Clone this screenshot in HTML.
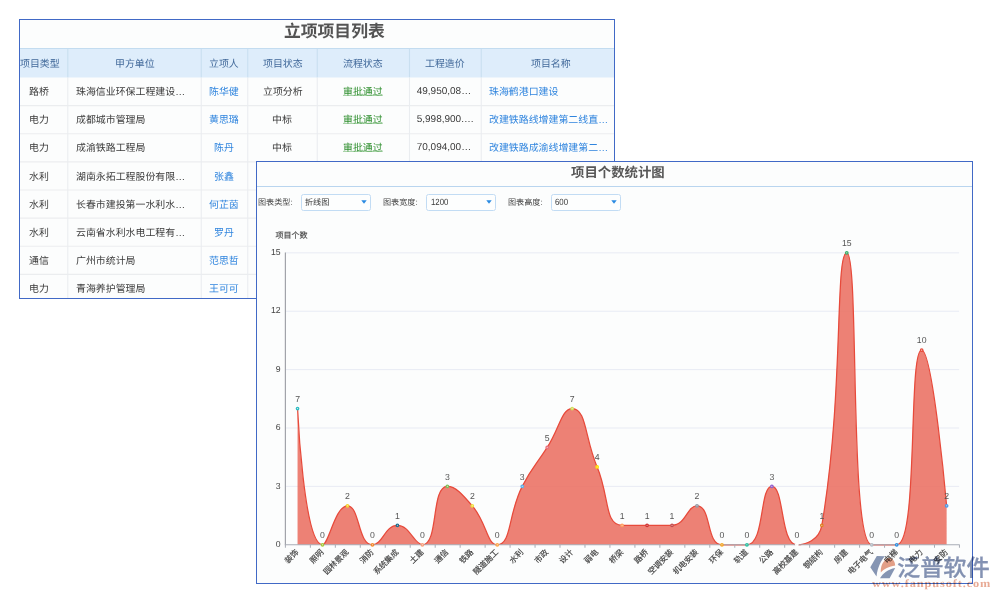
<!DOCTYPE html>
<html lang="zh-CN">
<head>
<meta charset="utf-8">
<title>立项项目列表 - 项目个数统计图</title>
<style>
html,body{margin:0;padding:0;background:#fff}
body{width:1000px;height:600px;position:relative;overflow:hidden;font-family:"Liberation Sans","Noto Sans CJK SC",sans-serif;text-rendering:geometricPrecision;-webkit-font-smoothing:antialiased}
#list,#chart{position:absolute;border:1px solid #4169c6;background:#fcfdfd;overflow:hidden}
#list *,#chart>*,#logo>*{position:absolute}
svg.t{display:block;overflow:visible;font-family:"Liberation Sans","Noto Sans CJK SC",sans-serif}
svg.bg{left:0;top:0}
.n{white-space:nowrap;letter-spacing:0}
.tl{left:0;right:0;height:1px;background:#b9d5ef}
.sel{border:1px solid #c2dcf4;border-radius:2.5px;background:#fdfefe}
#plot{left:0;top:0;font-family:"Liberation Sans","Noto Sans CJK SC",sans-serif;text-rendering:geometricPrecision}
.yl{font-size:8.7px;fill:#444}
.vl{font-size:8.7px;fill:#555}
#logo{position:absolute;left:0;top:0;width:1000px;height:600px;pointer-events:none;mix-blend-mode:multiply}
.url{font-family:"Liberation Serif",serif;font-weight:bold;font-size:11px;line-height:18px;letter-spacing:.8px;color:#e8aa95;white-space:nowrap;transform:scaleX(1.12);transform-origin:0 50%}
</style>
</head>
<body>
<div id="list" style="left:19px;top:19px;width:594px;height:278px">
<svg class="bg" width="594" height="278" viewBox="20 20 594 278" aria-hidden="true"><rect x="20" y="48.2" width="594" height="29.3" fill="#deedfb"/><path d="M20 48.5h594" stroke="#c3dcf0" stroke-width="1.2"/><path d="M20 105.63h594M20 133.76h594M20 161.89h594M20 190.02h594M20 218.15h594M20 246.28h594M20 274.41h594M20 302.54h594" stroke="#ebedef" stroke-width="1.1"/><path d="M67.8 49V77.5M201.25 49V77.5M247.75 49V77.5M317.25 49V77.5M409.5 49V77.5M481.25 49V77.5" stroke="#c9dff0" stroke-width="1.1"/><path d="M67.8 77.5V299M201.25 77.5V299M247.75 77.5V299M317.25 77.5V299M409.5 77.5V299M481.25 77.5V299" stroke="#eaedf0" stroke-width="1.1"/></svg>
<svg class="t" role="img" aria-label="立项项目列表" width="100.8" height="16.8" fill="#545454" style="left:263.7px;top:1.9px;"><title>立项项目列表</title><text x="0" y="14.8" font-size="16.8" font-weight="bold">立项项目列表</text></svg>
<svg class="t" role="img" aria-label="项目类型" width="39.72" height="9.93" fill="#41699a" style="left:0.04px;top:38.03px;"><title>项目类型</title><text x="0" y="8.74" font-size="9.93">项目类型</text></svg>
<svg class="t" role="img" aria-label="甲方单位" width="39.72" height="9.93" fill="#41699a" style="left:94.89px;top:38.03px;"><title>甲方单位</title><text x="0" y="8.74" font-size="9.93">甲方单位</text></svg>
<svg class="t" role="img" aria-label="立项人" width="29.79" height="9.93" fill="#41699a" style="left:189.41px;top:38.03px;"><title>立项人</title><text x="0" y="8.74" font-size="9.93">立项人</text></svg>
<svg class="t" role="img" aria-label="项目状态" width="39.72" height="9.93" fill="#41699a" style="left:242.54px;top:38.03px;"><title>项目状态</title><text x="0" y="8.74" font-size="9.93">项目状态</text></svg>
<svg class="t" role="img" aria-label="流程状态" width="39.72" height="9.93" fill="#41699a" style="left:323.24px;top:38.03px;"><title>流程状态</title><text x="0" y="8.74" font-size="9.93">流程状态</text></svg>
<svg class="t" role="img" aria-label="工程造价" width="39.72" height="9.93" fill="#41699a" style="left:405.24px;top:38.03px;"><title>工程造价</title><text x="0" y="8.74" font-size="9.93">工程造价</text></svg>
<svg class="t" role="img" aria-label="项目名称" width="39.72" height="9.93" fill="#41699a" style="left:510.89px;top:38.03px;"><title>项目名称</title><text x="0" y="8.74" font-size="9.93">项目名称</text></svg>
<svg class="t" role="img" aria-label="路桥" width="19.86" height="9.93" fill="#3a3a3a" style="left:9.27px;top:66.2px;"><title>路桥</title><text x="0" y="8.74" font-size="9.93">路桥</text></svg>
<svg class="t" role="img" aria-label="珠海信业环保工程建设…" width="109.23" height="9.93" fill="#3a3a3a" style="left:55.6px;top:66.2px;"><title>珠海信业环保工程建设…</title><text x="0" y="8.74" font-size="9.93">珠海信业环保工程建设…</text></svg>
<svg class="t" role="img" aria-label="陈华健" width="29.79" height="9.93" fill="#3085de" style="left:189.41px;top:66.2px;"><title>陈华健</title><text x="0" y="8.74" font-size="9.93">陈华健</text></svg>
<svg class="t" role="img" aria-label="立项分析" width="39.72" height="9.93" fill="#3a3a3a" style="left:242.54px;top:66.2px;"><title>立项分析</title><text x="0" y="8.74" font-size="9.93">立项分析</text></svg>
<svg class="t" role="img" aria-label="审批通过" width="39.72" height="9.93" fill="#2f8f2f" style="left:323.24px;top:66.2px;"><title>审批通过</title><text x="0" y="8.74" font-size="9.93">审批通过</text><path d="M0 9.38H39.72" stroke="#6bb56b" stroke-width=".65" fill="none"/></svg>
<span class="n" style="left:396.7px;top:66.06px;font-size:10px;line-height:12px;color:#3a3a3a;">49,950,08…</span>
<svg class="t" role="img" aria-label="珠海鹤港口建设" width="69.51" height="9.93" fill="#3085de" style="left:469.3px;top:66.2px;"><title>珠海鹤港口建设</title><text x="0" y="8.74" font-size="9.93">珠海鹤港口建设</text></svg>
<svg class="t" role="img" aria-label="电力" width="19.86" height="9.93" fill="#3a3a3a" style="left:9.27px;top:94.33px;"><title>电力</title><text x="0" y="8.74" font-size="9.93">电力</text></svg>
<svg class="t" role="img" aria-label="成都城市管理局" width="69.51" height="9.93" fill="#3a3a3a" style="left:55.6px;top:94.33px;"><title>成都城市管理局</title><text x="0" y="8.74" font-size="9.93">成都城市管理局</text></svg>
<svg class="t" role="img" aria-label="黄思璐" width="29.79" height="9.93" fill="#3085de" style="left:189.41px;top:94.33px;"><title>黄思璐</title><text x="0" y="8.74" font-size="9.93">黄思璐</text></svg>
<svg class="t" role="img" aria-label="中标" width="19.86" height="9.93" fill="#3a3a3a" style="left:252.47px;top:94.33px;"><title>中标</title><text x="0" y="8.74" font-size="9.93">中标</text></svg>
<svg class="t" role="img" aria-label="审批通过" width="39.72" height="9.93" fill="#2f8f2f" style="left:323.24px;top:94.33px;"><title>审批通过</title><text x="0" y="8.74" font-size="9.93">审批通过</text><path d="M0 9.38H39.72" stroke="#6bb56b" stroke-width=".65" fill="none"/></svg>
<span class="n" style="left:396.7px;top:94.19px;font-size:10px;line-height:12px;color:#3a3a3a;">5,998,900.…</span>
<svg class="t" role="img" aria-label="改建铁路线增建第二线直…" width="119.16" height="9.93" fill="#3085de" style="left:469.3px;top:94.33px;"><title>改建铁路线增建第二线直…</title><text x="0" y="8.74" font-size="9.93">改建铁路线增建第二线直…</text></svg>
<svg class="t" role="img" aria-label="电力" width="19.86" height="9.93" fill="#3a3a3a" style="left:9.27px;top:122.46px;"><title>电力</title><text x="0" y="8.74" font-size="9.93">电力</text></svg>
<svg class="t" role="img" aria-label="成渝铁路工程局" width="69.51" height="9.93" fill="#3a3a3a" style="left:55.6px;top:122.46px;"><title>成渝铁路工程局</title><text x="0" y="8.74" font-size="9.93">成渝铁路工程局</text></svg>
<svg class="t" role="img" aria-label="陈丹" width="19.86" height="9.93" fill="#3085de" style="left:194.37px;top:122.46px;"><title>陈丹</title><text x="0" y="8.74" font-size="9.93">陈丹</text></svg>
<svg class="t" role="img" aria-label="中标" width="19.86" height="9.93" fill="#3a3a3a" style="left:252.47px;top:122.46px;"><title>中标</title><text x="0" y="8.74" font-size="9.93">中标</text></svg>
<svg class="t" role="img" aria-label="审批通过" width="39.72" height="9.93" fill="#2f8f2f" style="left:323.24px;top:122.46px;"><title>审批通过</title><text x="0" y="8.74" font-size="9.93">审批通过</text><path d="M0 9.38H39.72" stroke="#6bb56b" stroke-width=".65" fill="none"/></svg>
<span class="n" style="left:396.7px;top:122.32px;font-size:10px;line-height:12px;color:#3a3a3a;">70,094,00…</span>
<svg class="t" role="img" aria-label="改建铁路成渝线增建第二…" width="119.16" height="9.93" fill="#3085de" style="left:469.3px;top:122.46px;"><title>改建铁路成渝线增建第二…</title><text x="0" y="8.74" font-size="9.93">改建铁路成渝线增建第二…</text></svg>
<svg class="t" role="img" aria-label="水利" width="19.86" height="9.93" fill="#3a3a3a" style="left:9.27px;top:150.59px;"><title>水利</title><text x="0" y="8.74" font-size="9.93">水利</text></svg>
<svg class="t" role="img" aria-label="湖南永拓工程股份有限…" width="109.23" height="9.93" fill="#3a3a3a" style="left:55.6px;top:150.59px;"><title>湖南永拓工程股份有限…</title><text x="0" y="8.74" font-size="9.93">湖南永拓工程股份有限…</text></svg>
<svg class="t" role="img" aria-label="张鑫" width="19.86" height="9.93" fill="#3085de" style="left:194.37px;top:150.59px;"><title>张鑫</title><text x="0" y="8.74" font-size="9.93">张鑫</text></svg>
<svg class="t" role="img" aria-label="水利" width="19.86" height="9.93" fill="#3a3a3a" style="left:9.27px;top:178.72px;"><title>水利</title><text x="0" y="8.74" font-size="9.93">水利</text></svg>
<svg class="t" role="img" aria-label="长春市建投第一水利水…" width="109.23" height="9.93" fill="#3a3a3a" style="left:55.6px;top:178.72px;"><title>长春市建投第一水利水…</title><text x="0" y="8.74" font-size="9.93">长春市建投第一水利水…</text></svg>
<svg class="t" role="img" aria-label="何芷茵" width="29.79" height="9.93" fill="#3085de" style="left:189.41px;top:178.72px;"><title>何芷茵</title><text x="0" y="8.74" font-size="9.93">何芷茵</text></svg>
<svg class="t" role="img" aria-label="水利" width="19.86" height="9.93" fill="#3a3a3a" style="left:9.27px;top:206.85px;"><title>水利</title><text x="0" y="8.74" font-size="9.93">水利</text></svg>
<svg class="t" role="img" aria-label="云南省水利水电工程有…" width="109.23" height="9.93" fill="#3a3a3a" style="left:55.6px;top:206.85px;"><title>云南省水利水电工程有…</title><text x="0" y="8.74" font-size="9.93">云南省水利水电工程有…</text></svg>
<svg class="t" role="img" aria-label="罗丹" width="19.86" height="9.93" fill="#3085de" style="left:194.37px;top:206.85px;"><title>罗丹</title><text x="0" y="8.74" font-size="9.93">罗丹</text></svg>
<svg class="t" role="img" aria-label="通信" width="19.86" height="9.93" fill="#3a3a3a" style="left:9.27px;top:234.98px;"><title>通信</title><text x="0" y="8.74" font-size="9.93">通信</text></svg>
<svg class="t" role="img" aria-label="广州市统计局" width="59.58" height="9.93" fill="#3a3a3a" style="left:55.6px;top:234.98px;"><title>广州市统计局</title><text x="0" y="8.74" font-size="9.93">广州市统计局</text></svg>
<svg class="t" role="img" aria-label="范思哲" width="29.79" height="9.93" fill="#3085de" style="left:189.41px;top:234.98px;"><title>范思哲</title><text x="0" y="8.74" font-size="9.93">范思哲</text></svg>
<svg class="t" role="img" aria-label="电力" width="19.86" height="9.93" fill="#3a3a3a" style="left:9.27px;top:263.11px;"><title>电力</title><text x="0" y="8.74" font-size="9.93">电力</text></svg>
<svg class="t" role="img" aria-label="青海养护管理局" width="69.51" height="9.93" fill="#3a3a3a" style="left:55.6px;top:263.11px;"><title>青海养护管理局</title><text x="0" y="8.74" font-size="9.93">青海养护管理局</text></svg>
<svg class="t" role="img" aria-label="王可可" width="29.79" height="9.93" fill="#3085de" style="left:189.41px;top:263.11px;"><title>王可可</title><text x="0" y="8.74" font-size="9.93">王可可</text></svg>
</div>
<div id="chart" style="left:256px;top:161px;width:715px;height:421px">
<svg class="t" role="img" aria-label="项目个数统计图" width="93.8" height="13.4" fill="#575757" style="left:314.1px;top:3.1px;"><title>项目个数统计图</title><text x="0" y="11.8" font-size="13.4" font-weight="bold">项目个数统计图</text></svg>
<div class="tl" style="top:24px"></div>
<svg class="t" role="img" aria-label="图表类型:" width="34.65" height="8.1" fill="#444" style="left:1.4px;top:36.35px;"><title>图表类型:</title><text x="0" y="7.13" font-size="8.1">图表类型:</text></svg>
<div class="sel" style="left:44px;top:32.4px;width:68px;height:14.2px"></div>
<svg class="t" role="img" aria-label="折线图" width="24.3" height="8.1" fill="#333" style="left:48.2px;top:36.35px;"><title>折线图</title><text x="0" y="7.13" font-size="8.1">折线图</text></svg>
<svg class="t" style="left:103.6px;top:38.2px" width="6" height="4" viewBox="0 0 6 4" aria-hidden="true"><path d="M.3 .2H5.7L3 3.8Z" fill="#2a8ae2"/></svg>
<svg class="t" role="img" aria-label="图表宽度:" width="34.65" height="8.1" fill="#444" style="left:126.2px;top:36.35px;"><title>图表宽度:</title><text x="0" y="7.13" font-size="8.1">图表宽度:</text></svg>
<div class="sel" style="left:169.4px;top:32.4px;width:67.8px;height:14.2px"></div>
<span class="n" style="left:174px;top:35.1px;font-size:9px;line-height:10.8px;color:#3a3a3a;transform:scaleX(.87);transform-origin:0 50%;">1200</span>
<svg class="t" style="left:228.8px;top:38.2px" width="6" height="4" viewBox="0 0 6 4" aria-hidden="true"><path d="M.3 .2H5.7L3 3.8Z" fill="#2a8ae2"/></svg>
<svg class="t" role="img" aria-label="图表高度:" width="34.65" height="8.1" fill="#444" style="left:251px;top:36.35px;"><title>图表高度:</title><text x="0" y="7.13" font-size="8.1">图表高度:</text></svg>
<div class="sel" style="left:293.8px;top:32.4px;width:68px;height:14.2px"></div>
<span class="n" style="left:298.4px;top:35.1px;font-size:9px;line-height:10.8px;color:#3a3a3a;transform:scaleX(.87);transform-origin:0 50%;">600</span>
<svg class="t" style="left:353.6px;top:38.2px" width="6" height="4" viewBox="0 0 6 4" aria-hidden="true"><path d="M.3 .2H5.7L3 3.8Z" fill="#2a8ae2"/></svg>
<svg id="plot" width="715" height="421" viewBox="257 162 715 421" aria-label="项目个数统计图 折线图"><path d="M285.4 486.37H959.12" stroke="#e8ebf4" stroke-width="1"/><path d="M285.4 427.99H959.12" stroke="#e8ebf4" stroke-width="1"/><path d="M285.4 369.61H959.12" stroke="#e8ebf4" stroke-width="1"/><path d="M285.4 311.23H959.12" stroke="#e8ebf4" stroke-width="1"/><path d="M285.4 252.85H959.12" stroke="#e8ebf4" stroke-width="1"/><text class="yl" x="280.6" y="546.95" text-anchor="end">0</text><text class="yl" x="280.6" y="488.57" text-anchor="end">3</text><text class="yl" x="280.6" y="430.19" text-anchor="end">6</text><text class="yl" x="280.6" y="371.81" text-anchor="end">9</text><text class="yl" x="280.6" y="313.43" text-anchor="end">12</text><text class="yl" x="280.6" y="255.05" text-anchor="end">15</text><g fill="#444" stroke="#444" stroke-width=".16"><text x="275.6" y="238.24" font-size="8">项目个数</text></g><path d="M297.55 408.53C297.55 408.53 303.8 544.75 322.51 544.75C328.76 544.75 335 505.83 347.48 505.83C359.96 505.83 357.63 544.75 372.44 544.75C382.59 544.75 384.93 525.29 397.41 525.29C409.89 525.29 414.07 544.75 422.38 544.75C439.03 544.75 430.68 486.37 447.34 486.37C455.65 486.37 462.16 493.97 472.31 505.83C487.12 523.16 486.75 544.75 497.27 544.75C511.72 544.75 507.79 514.52 522.24 486.37C532.75 465.87 534.72 466.91 547.2 447.45C559.68 427.99 561.65 408.53 572.16 408.53C586.61 408.53 584.65 437.72 597.13 466.91C609.61 496.1 604.18 525.29 622.1 525.29C629.14 525.29 634.58 525.29 647.06 525.29C659.54 525.29 661.02 525.29 672.03 525.29C685.98 525.29 686.84 505.83 696.99 505.83C711.81 505.83 705.74 544.75 721.95 544.75C730.71 544.75 739.87 544.75 746.92 544.75C764.84 544.75 759.4 486.37 771.88 486.37C784.37 486.37 780.19 544.75 796.85 544.75C805.16 544.75 819.23 540.43 821.82 525.29C844.19 394.48 834.72 252.85 846.78 252.85C859.69 252.85 848.74 544.75 871.75 544.75C873.71 544.75 893.89 544.75 896.71 544.75C918.86 544.75 907.83 350.15 921.67 350.15C932.8 350.15 946.64 505.83 946.64 505.83L946.64 544.75L297.55 544.75Z" fill="#ea6f62" fill-opacity="0.88"/><path d="M297.55 408.53C297.55 408.53 303.8 544.75 322.51 544.75C328.76 544.75 335 505.83 347.48 505.83C359.96 505.83 357.63 544.75 372.44 544.75C382.59 544.75 384.93 525.29 397.41 525.29C409.89 525.29 414.07 544.75 422.38 544.75C439.03 544.75 430.68 486.37 447.34 486.37C455.65 486.37 462.16 493.97 472.31 505.83C487.12 523.16 486.75 544.75 497.27 544.75C511.72 544.75 507.79 514.52 522.24 486.37C532.75 465.87 534.72 466.91 547.2 447.45C559.68 427.99 561.65 408.53 572.16 408.53C586.61 408.53 584.65 437.72 597.13 466.91C609.61 496.1 604.18 525.29 622.1 525.29C629.14 525.29 634.58 525.29 647.06 525.29C659.54 525.29 661.02 525.29 672.03 525.29C685.98 525.29 686.84 505.83 696.99 505.83C711.81 505.83 705.74 544.75 721.95 544.75C730.71 544.75 739.87 544.75 746.92 544.75C764.84 544.75 759.4 486.37 771.88 486.37C784.37 486.37 780.19 544.75 796.85 544.75C805.16 544.75 819.23 540.43 821.82 525.29C844.19 394.48 834.72 252.85 846.78 252.85C859.69 252.85 848.74 544.75 871.75 544.75C873.71 544.75 893.89 544.75 896.71 544.75C918.86 544.75 907.83 350.15 921.67 350.15C932.8 350.15 946.64 505.83 946.64 505.83" fill="none" stroke="#e74a3b" stroke-width="1.25" stroke-linejoin="round"/><path d="M285.4 252.55V545.25" stroke="#a2a4aa" stroke-width="1.2"/><path d="M284.9 544.75H959.62" stroke="#a9adb6" stroke-width="1.1"/><path d="M285.4 544.75v3M310.36 544.75v3M335.33 544.75v3M360.29 544.75v3M385.26 544.75v3M410.22 544.75v3M435.19 544.75v3M460.15 544.75v3M485.12 544.75v3M510.08 544.75v3M535.05 544.75v3M560.01 544.75v3M584.98 544.75v3M609.94 544.75v3M634.91 544.75v3M659.88 544.75v3M684.84 544.75v3M709.8 544.75v3M734.77 544.75v3M759.73 544.75v3M784.7 544.75v3M809.66 544.75v3M834.63 544.75v3M859.6 544.75v3M884.56 544.75v3M909.52 544.75v3M934.49 544.75v3M959.45 544.75v3" stroke="#a9adb6" stroke-width="1"/><circle cx="297.55" cy="408.53" r="1.2" fill="#fff" fill-opacity=".8" stroke="#2fbfc4" stroke-width="1.35"/><text class="vl" x="297.55" y="401.83" text-anchor="middle">7</text><circle cx="322.51" cy="544.75" r="1.2" fill="#fff" fill-opacity=".8" stroke="#a5cc3a" stroke-width="1.35"/><text class="vl" x="322.51" y="538.05" text-anchor="middle">0</text><circle cx="347.48" cy="505.83" r="1.2" fill="#fff" fill-opacity=".8" stroke="#f3d32c" stroke-width="1.35"/><text class="vl" x="347.48" y="499.13" text-anchor="middle">2</text><circle cx="372.44" cy="544.75" r="1.2" fill="#fff" fill-opacity=".8" stroke="#f58a2c" stroke-width="1.35"/><text class="vl" x="372.44" y="538.05" text-anchor="middle">0</text><circle cx="397.41" cy="525.29" r="1.2" fill="#fff" fill-opacity=".8" stroke="#1f6f8f" stroke-width="1.35"/><text class="vl" x="397.41" y="518.59" text-anchor="middle">1</text><circle cx="422.38" cy="544.75" r="1.2" fill="#fff" fill-opacity=".8" stroke="#f9a07c" stroke-width="1.35"/><text class="vl" x="422.38" y="538.05" text-anchor="middle">0</text><circle cx="447.34" cy="486.37" r="1.2" fill="#fff" fill-opacity=".8" stroke="#7cc35a" stroke-width="1.35"/><text class="vl" x="447.34" y="479.67" text-anchor="middle">3</text><circle cx="472.31" cy="505.83" r="1.2" fill="#fff" fill-opacity=".8" stroke="#efe23c" stroke-width="1.35"/><text class="vl" x="472.31" y="499.13" text-anchor="middle">2</text><circle cx="497.27" cy="544.75" r="1.2" fill="#fff" fill-opacity=".8" stroke="#ffa648" stroke-width="1.35"/><text class="vl" x="497.27" y="538.05" text-anchor="middle">0</text><circle cx="522.24" cy="486.37" r="1.2" fill="#fff" fill-opacity=".8" stroke="#58b4ee" stroke-width="1.35"/><text class="vl" x="522.24" y="479.67" text-anchor="middle">3</text><circle cx="547.2" cy="447.45" r="1.2" fill="#fff" fill-opacity=".8" stroke="#e9707c" stroke-width="1.35"/><text class="vl" x="547.2" y="440.75" text-anchor="middle">5</text><circle cx="572.16" cy="408.53" r="1.2" fill="#fff" fill-opacity=".8" stroke="#cfe05c" stroke-width="1.35"/><text class="vl" x="572.16" y="401.83" text-anchor="middle">7</text><circle cx="597.13" cy="466.91" r="1.2" fill="#fff" fill-opacity=".8" stroke="#ffe100" stroke-width="1.35"/><text class="vl" x="597.13" y="460.21" text-anchor="middle">4</text><circle cx="622.1" cy="525.29" r="1.2" fill="#fff" fill-opacity=".8" stroke="#ffa060" stroke-width="1.35"/><text class="vl" x="622.1" y="518.59" text-anchor="middle">1</text><circle cx="647.06" cy="525.29" r="1.2" fill="#fff" fill-opacity=".8" stroke="#cf3030" stroke-width="1.35"/><text class="vl" x="647.06" y="518.59" text-anchor="middle">1</text><circle cx="672.03" cy="525.29" r="1.2" fill="#fff" fill-opacity=".8" stroke="#c24c4c" stroke-width="1.35"/><text class="vl" x="672.03" y="518.59" text-anchor="middle">1</text><circle cx="696.99" cy="505.83" r="1.2" fill="#fff" fill-opacity=".8" stroke="#8f9aa6" stroke-width="1.35"/><text class="vl" x="696.99" y="499.13" text-anchor="middle">2</text><circle cx="721.95" cy="544.75" r="1.2" fill="#fff" fill-opacity=".8" stroke="#f5a623" stroke-width="1.35"/><text class="vl" x="721.95" y="538.05" text-anchor="middle">0</text><circle cx="746.92" cy="544.75" r="1.2" fill="#fff" fill-opacity=".8" stroke="#26bfa0" stroke-width="1.35"/><text class="vl" x="746.92" y="538.05" text-anchor="middle">0</text><circle cx="771.88" cy="486.37" r="1.2" fill="#fff" fill-opacity=".8" stroke="#8f5fd0" stroke-width="1.35"/><text class="vl" x="771.88" y="479.67" text-anchor="middle">3</text><circle cx="796.85" cy="544.75" r="1.2" fill="#fff" fill-opacity=".8" stroke="#ffffff" stroke-width="1.35"/><text class="vl" x="796.85" y="538.05" text-anchor="middle">0</text><circle cx="821.82" cy="525.29" r="1.2" fill="#fff" fill-opacity=".8" stroke="#e07f20" stroke-width="1.35"/><text class="vl" x="821.82" y="518.59" text-anchor="middle">1</text><circle cx="846.78" cy="252.85" r="1.2" fill="#fff" fill-opacity=".8" stroke="#34b36c" stroke-width="1.35"/><text class="vl" x="846.78" y="246.15" text-anchor="middle">15</text><circle cx="871.75" cy="544.75" r="1.2" fill="#fff" fill-opacity=".8" stroke="#b4bcc4" stroke-width="1.35"/><text class="vl" x="871.75" y="538.05" text-anchor="middle">0</text><circle cx="896.71" cy="544.75" r="1.2" fill="#fff" fill-opacity=".8" stroke="#2f8fe0" stroke-width="1.35"/><text class="vl" x="896.71" y="538.05" text-anchor="middle">0</text><circle cx="921.67" cy="350.15" r="1.2" fill="#fff" fill-opacity=".8" stroke="#e74c3c" stroke-width="1.35"/><text class="vl" x="921.67" y="343.45" text-anchor="middle">10</text><circle cx="946.64" cy="505.83" r="1.2" fill="#fff" fill-opacity=".8" stroke="#4a9ae8" stroke-width="1.35"/><text class="vl" x="946.64" y="499.13" text-anchor="middle">2</text><g transform="translate(297.05 550.6) rotate(-45)" fill="#444" stroke="#444" stroke-width=".17"><text x="0" y="3" font-size="7.9" text-anchor="end">装饰</text></g><g transform="translate(322.01 550.6) rotate(-45)" fill="#444" stroke="#444" stroke-width=".17"><text x="0" y="3" font-size="7.9" text-anchor="end">照明</text></g><g transform="translate(346.98 550.6) rotate(-45)" fill="#444" stroke="#444" stroke-width=".17"><text x="0" y="3" font-size="7.9" text-anchor="end">园林景观</text></g><g transform="translate(371.94 550.6) rotate(-45)" fill="#444" stroke="#444" stroke-width=".17"><text x="0" y="3" font-size="7.9" text-anchor="end">消防</text></g><g transform="translate(396.91 550.6) rotate(-45)" fill="#444" stroke="#444" stroke-width=".17"><text x="0" y="3" font-size="7.9" text-anchor="end">系统集成</text></g><g transform="translate(421.88 550.6) rotate(-45)" fill="#444" stroke="#444" stroke-width=".17"><text x="0" y="3" font-size="7.9" text-anchor="end">土建</text></g><g transform="translate(446.84 550.6) rotate(-45)" fill="#444" stroke="#444" stroke-width=".17"><text x="0" y="3" font-size="7.9" text-anchor="end">通信</text></g><g transform="translate(471.81 550.6) rotate(-45)" fill="#444" stroke="#444" stroke-width=".17"><text x="0" y="3" font-size="7.9" text-anchor="end">铁路</text></g><g transform="translate(496.77 550.6) rotate(-45)" fill="#444" stroke="#444" stroke-width=".17"><text x="0" y="3" font-size="7.9" text-anchor="end">隧道施工</text></g><g transform="translate(521.74 550.6) rotate(-45)" fill="#444" stroke="#444" stroke-width=".17"><text x="0" y="3" font-size="7.9" text-anchor="end">水利</text></g><g transform="translate(546.7 550.6) rotate(-45)" fill="#444" stroke="#444" stroke-width=".17"><text x="0" y="3" font-size="7.9" text-anchor="end">市政</text></g><g transform="translate(571.66 550.6) rotate(-45)" fill="#444" stroke="#444" stroke-width=".17"><text x="0" y="3" font-size="7.9" text-anchor="end">设计</text></g><g transform="translate(596.63 550.6) rotate(-45)" fill="#444" stroke="#444" stroke-width=".17"><text x="0" y="3" font-size="7.9" text-anchor="end">弱电</text></g><g transform="translate(621.6 550.6) rotate(-45)" fill="#444" stroke="#444" stroke-width=".17"><text x="0" y="3" font-size="7.9" text-anchor="end">桥梁</text></g><g transform="translate(646.56 550.6) rotate(-45)" fill="#444" stroke="#444" stroke-width=".17"><text x="0" y="3" font-size="7.9" text-anchor="end">路桥</text></g><g transform="translate(671.53 550.6) rotate(-45)" fill="#444" stroke="#444" stroke-width=".17"><text x="0" y="3" font-size="7.9" text-anchor="end">空调安装</text></g><g transform="translate(696.49 550.6) rotate(-45)" fill="#444" stroke="#444" stroke-width=".17"><text x="0" y="3" font-size="7.9" text-anchor="end">机电安装</text></g><g transform="translate(721.45 550.6) rotate(-45)" fill="#444" stroke="#444" stroke-width=".17"><text x="0" y="3" font-size="7.9" text-anchor="end">环保</text></g><g transform="translate(746.42 550.6) rotate(-45)" fill="#444" stroke="#444" stroke-width=".17"><text x="0" y="3" font-size="7.9" text-anchor="end">轨道</text></g><g transform="translate(771.38 550.6) rotate(-45)" fill="#444" stroke="#444" stroke-width=".17"><text x="0" y="3" font-size="7.9" text-anchor="end">公路</text></g><g transform="translate(796.35 550.6) rotate(-45)" fill="#444" stroke="#444" stroke-width=".17"><text x="0" y="3" font-size="7.9" text-anchor="end">高校基建</text></g><g transform="translate(821.32 550.6) rotate(-45)" fill="#444" stroke="#444" stroke-width=".17"><text x="0" y="3" font-size="7.9" text-anchor="end">钢结构</text></g><g transform="translate(846.28 550.6) rotate(-45)" fill="#444" stroke="#444" stroke-width=".17"><text x="0" y="3" font-size="7.9" text-anchor="end">房建</text></g><g transform="translate(871.25 550.6) rotate(-45)" fill="#444" stroke="#444" stroke-width=".17"><text x="0" y="3" font-size="7.9" text-anchor="end">电子电气</text></g><g transform="translate(896.21 550.6) rotate(-45)" fill="#444" stroke="#444" stroke-width=".17"><text x="0" y="3" font-size="7.9" text-anchor="end">电梯</text></g><g transform="translate(921.17 550.6) rotate(-45)" fill="#444" stroke="#444" stroke-width=".17"><text x="0" y="3" font-size="7.9" text-anchor="end">电力</text></g><g transform="translate(946.14 550.6) rotate(-45)" fill="#444" stroke="#444" stroke-width=".17"><text x="0" y="3" font-size="7.9" text-anchor="end">安防</text></g></svg>
</div>
<div id="logo">
<svg class="t" style="left:868px;top:554px" width="30" height="26" viewBox="868 554 30 26" aria-label="logo"><path d="M876.8 556.1L885.1 556.25C881 560.1 877.6 567.6 876.5 576.5L870.3 567.2Z" fill="#8796b5"/><path d="M880.8 572.4C880.5 567 882.5 560.4 888.3 558C892.2 557.4 895 561 895.2 565.5C889 566.4 883.8 569.2 880.8 572.4Z" fill="#e5a088"/><path d="M895.2 568.1C888 569.4 882.8 573.4 880 578.3L889.6 578.3Z" fill="#8796b5"/></svg>
<svg class="t" role="img" aria-label="泛普软件" width="92.8" height="23.3" fill="#8492b3" style="left:897.3px;top:555.25px;stroke:#8492b3;stroke-width:.3;"><title>泛普软件</title><text x="0" y="20.5" font-size="23.2" font-weight="500">泛普软件</text></svg>
<span class="url" style="left:872.2px;top:575.3px">www.fanpusoft.com</span>
</div>
</body>
</html>
